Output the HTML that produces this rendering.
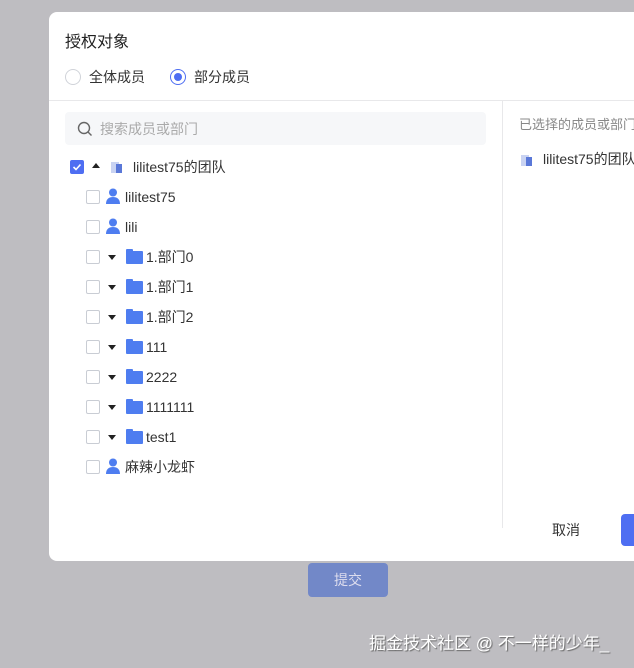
<!DOCTYPE html>
<html><head><meta charset="utf-8"><style>
*{box-sizing:border-box;margin:0;padding:0}
body{width:634px;height:668px;background:#bebdc1;position:relative;overflow:hidden;font-family:"Liberation Sans","Noto Sans CJK SC",sans-serif;color:#333}
.modal{position:absolute;left:49px;top:12px;width:600px;height:549px;background:#fff;border-radius:8px}
.t{position:absolute;font-size:14px;white-space:nowrap;line-height:20px;height:20px}
.cb{position:absolute;width:14px;height:14px;border:1px solid #c9cdd4;border-radius:2px;background:#fff}
.cb.on{background:#4e6ef2;border-color:#4e6ef2}
.tri{position:absolute;width:0;height:0;border-left:4px solid transparent;border-right:4px solid transparent;border-top:5px solid #222}
.tri.up{border-top:none;border-bottom:5px solid #222}
.fold{position:absolute;width:17px;height:13px;background:#4e7df0;border-radius:1px}
.fold:before{content:"";position:absolute;left:0;top:-2px;width:7px;height:3px;background:#4e7df0;border-radius:1px 1px 0 0}
.user{position:absolute;width:14px;height:16px}
</style></head><body>
<div class="modal">
<div class="t" style="left:16px;top:20px;font-size:16px;line-height:22px;color:#222">授权对象</div>
<div style="position:absolute;left:16px;top:57px;width:16px;height:16px;border:1px solid #d0d3d9;border-radius:50%"></div>
<div class="t" style="left:40px;top:55px;color:#333">全体成员</div>
<div style="position:absolute;left:121px;top:57px;width:16px;height:16px;border:1px solid #4e6ef2;border-radius:50%"><div style="position:absolute;left:3px;top:3px;width:8px;height:8px;background:#4e6ef2;border-radius:50%"></div></div>
<div class="t" style="left:145px;top:55px;color:#333">部分成员</div>
<div style="position:absolute;left:0;top:88px;width:600px;height:1px;background:#e8e8ea"></div>
<div style="position:absolute;left:453px;top:88px;width:1px;height:428px;background:#e8e8ea"></div>
<div style="position:absolute;left:16px;top:100px;width:421px;height:33px;background:#f6f7f9;border-radius:4px"></div>
<svg style="position:absolute;left:28px;top:109px" width="16" height="16" viewBox="0 0 16 16"><circle cx="7" cy="7" r="5.5" fill="none" stroke="#666" stroke-width="1.4"/><path d="M11 11l3.5 3.5" stroke="#666" stroke-width="1.4"/></svg>
<div class="t" style="left:51px;top:107px;color:#aaa">搜索成员或部门</div>
<div class="t" style="left:470px;top:103px;color:#888;font-size:13px">已选择的成员或部门</div>
<svg style="position:absolute;left:472px;top:141px" width="12" height="13"><rect x="0" y="2" width="8" height="11" fill="#c9d3f2"/><rect x="5" y="4" width="6" height="9" fill="#5a78d8"/></svg>
<div class="t" style="left:494px;top:137px;color:#333">lilitest75的团队</div>
<div class="t" style="left:503px;top:508px;color:#333">取消</div>
<div style="position:absolute;left:572px;top:502px;width:60px;height:32px;background:#4e6ef2;border-radius:4px"></div>
</div>
<div id="tree"></div>
<div style="position:absolute;left:308px;top:563px;width:80px;height:34px;background:#7288c8;border-radius:4px;color:#dde;font-size:14px;text-align:center;line-height:34px">提交</div>
<div style="position:absolute;left:369px;top:629px;font-size:17px;color:#fff;text-shadow:1px 1px 1px #666;white-space:nowrap">掘金技术社区 @ 不一样的少年_</div>
<script>
var rows=[["team","lilitest75的团队"],["u","lilitest75"],["u","lili"],["f","1.部门0"],["f","1.部门1"],["f","1.部门2"],["f","111"],["f","2222"],["f","1111111"],["f","test1"],["u","麻辣小龙虾"]];
var h="";
rows.forEach(function(r,i){var y=167+i*30;
if(r[0]=="team"){h+='<div class="cb on" style="left:70px;top:'+(y-7)+'px"><svg width="12" height="12" style="position:absolute;left:0;top:0"><path d="M2.5 6l2.5 2.5 4.5-5" fill="none" stroke="#fff" stroke-width="1.6"/></svg></div><div class="tri up" style="left:92px;top:'+(y-4)+'px"></div><svg style="position:absolute;left:111px;top:'+(y-7)+'px" width="12" height="13"><rect x="0" y="2" width="8" height="11" fill="#c9d3f2"/><rect x="5" y="4" width="6" height="9" fill="#5a78d8"/></svg><div class="t" style="left:133px;top:'+(y-10)+'px">'+r[1]+'</div>';}
else{h+='<div class="cb" style="left:86px;top:'+(y-7)+'px"></div>';
if(r[0]=="u"){h+='<svg class="user" style="left:106px;top:'+(y-9)+'px" viewBox="0 0 14 16"><circle cx="7" cy="4.5" r="4" fill="#4e7df0"/><path d="M0 16c0-5 3-7 7-7s7 2 7 7z" fill="#4e7df0"/></svg><div class="t" style="left:125px;top:'+(y-10)+'px">'+r[1]+'</div>';}
else{h+='<div class="tri" style="left:108px;top:'+(y-2)+'px"></div><div class="fold" style="left:126px;top:'+(y-6)+'px"></div><div class="t" style="left:146px;top:'+(y-10)+'px">'+r[1]+'</div>';}}
});
document.getElementById("tree").innerHTML=h;
</script>
</body></html>
